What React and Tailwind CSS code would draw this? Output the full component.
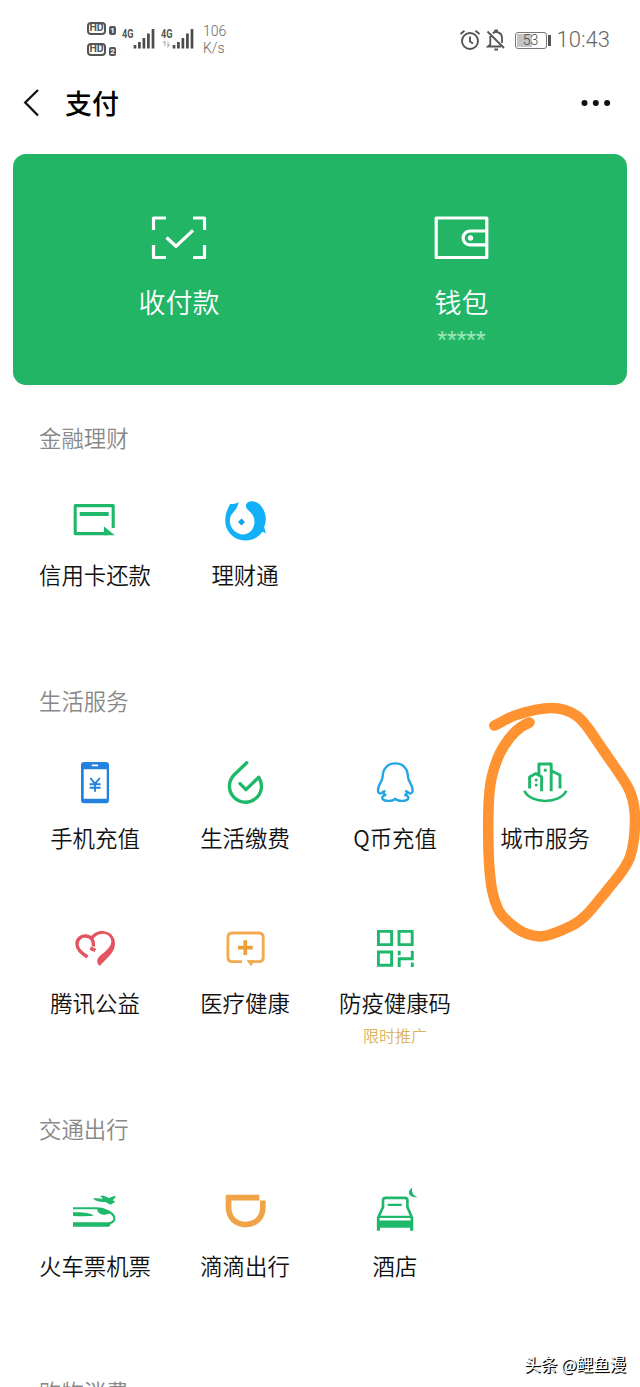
import React from 'react';

const GREEN = '#1fb86b';

function Icon({ children }) {
  return (
    <svg viewBox="0 0 60 60" className="block h-[60px] w-[60px]" fill="none">
      {children}
    </svg>
  );
}

const CardIcon = () => (
  <Icon>
    <path d="M48.2 38V15.6H10.2V43.6H42" stroke={GREEN} strokeWidth="3.1" strokeLinejoin="round" />
    <path d="M14.7 24H43.7" stroke={GREEN} strokeWidth="4" />
    <path d="M39 36.5L49.8 45.2H39Z" fill={GREEN} />
  </Icon>
);

const FundIcon = () => (
  <Icon>
    <path
      fill="#12b0f8"
      d="M23.7 12.3C20 14 18 14.5 15 13.8C14.3 16.5 12.5 19 11.5 22C10 27 9.6 33 11.6 38C14.5 45 21.5 50.5 30.5 50.5C37.5 50.5 43.5 47.5 47 42.3C48.2 41.8 49.5 42.3 50.6 43.8C50.8 41.5 49.8 39.5 49.1 37.3C50.8 33.3 51.3 29.3 50.2 24.3C48.2 16.3 43 11 36.7 11.2C32.5 11.2 30.4 14 31 17C31.7 20 36.3 22 38.2 26C40.6 31 39.6 37 36 41C31.5 45.5 24.5 45.5 19.8 41.3C14.8 36.8 13.6 30.5 16 25.5C18.5 21 22 20 23.7 12.3Z"
    />
    <path fill="#12a0e8" d="M26.5 28.5L30 32L26.5 35.5L23 32Z" />
  </Icon>
);

const PhoneIcon = () => (
  <Icon>
    <path
      fill="#2382de"
      fillRule="evenodd"
      d="M19 9H41Q44 9 44 12V47.3Q44 50.3 41 50.3H19Q16 50.3 16 47.3V12Q16 9 19 9ZM18.7 16.3V45.7H41.7V16.3ZM26.8 11.6V13.2H33V11.6Z"
    />
    <path d="M25.3 25L30 30.7L34.9 25M30 30.7V38.8M24.6 31.2H35.6M24.6 34.7H35.6" stroke="#2382de" strokeWidth="1.9" />
  </Icon>
);

const DropIcon = () => (
  <Icon>
    <path
      d="M31.7 9.8L19 22A16 16 0 1 0 43.7 24.2L31 36.6L25 30.6"
      stroke={GREEN}
      strokeWidth="3.4"
      strokeLinecap="round"
      strokeLinejoin="round"
    />
  </Icon>
);

const PenguinIcon = () => (
  <Icon>
    <path
      d="M19.5 38.2C17.6 38.6 17.2 40.3 15.4 40.6C13.6 40.6 12.9 38.8 13 36.5C13.3 31.5 17.4 28.5 17.6 24C17.8 16 22.3 10.4 30.3 10.4C38.3 10.4 42.8 16 43 24C43.2 28.5 47.3 31.5 47.6 36.5C47.7 38.8 47 40.6 45.2 40.6C43.4 40.3 43 38.6 41.1 38.2M18.6 39.2C18.9 40.6 19.6 41.4 20.4 42C17.6 42.6 16.6 44.4 17.6 46C19.5 48.8 28 48.4 30.3 45.7C32.6 48.4 41.1 48.8 43 46C44 44.4 43 42.6 40.2 42C41 41.4 41.7 40.6 42 39.2"
      stroke="#24a6e4"
      strokeWidth="2.4"
      strokeLinecap="round"
      strokeLinejoin="round"
    />
  </Icon>
);

const CityIcon = () => (
  <Icon>
    <g stroke={GREEN} strokeWidth="2.9" strokeLinejoin="round">
      <path d="M14.6 35.4V24L20.8 20.6L26.6 23.8V38.3M23.9 21V11H36.2V38.3M36.2 17.8L45 22V35.4" />
      <path d="M9.3 37.8C15.5 51.3 45 51.3 51.3 37.8" strokeWidth="2.6" />
    </g>
    <g fill={GREEN}>
      <circle cx="30.3" cy="17.2" r="1.6" />
      <circle cx="21.2" cy="27" r="1.5" />
      <circle cx="21.2" cy="32" r="1.5" />
    </g>
  </Icon>
);

const HeartIcon = () => (
  <Icon>
    <path d="M22.5 39C16 34.5 12 31.5 12 26C12 20.5 16.5 17.7 21 18C26.5 18.5 29 22.5 28.4 28.5" stroke="#e35460" strokeWidth="3.4" />
    <path d="M25.3 30.2L30.4 32.4" stroke="#e35460" strokeWidth="3.6" />
    <path
      fill="#e35460"
      d="M25.2 19.5C28 15.2 32.5 12.8 37.8 13C45 13.5 50.2 18.5 50 25.8C49.8 34.5 43.5 38.5 34.5 48C32 45.2 31.5 43 33 40.3C36 35.5 46 31 46.3 24C46.5 19 42.5 15.7 37.8 15.7C33.5 15.7 30.5 18 28 21.2Z"
    />
  </Icon>
);

const MedicalIcon = () => (
  <Icon>
    <g transform="translate(0 -2)">
      <path
        d="M27 45.6H17.4Q12.9 45.6 12.9 41.2V21.4Q12.9 17 17.4 17H43.7Q48.2 17 48.2 21.4V41.2Q48.2 45.6 43.7 45.6H33"
        stroke="#f2ab50"
        strokeWidth="2.9"
      />
      <path d="M31.5 44.3H39.5L36.2 50.3Z" fill="#f2ab50" />
      <path d="M30.3 24.2V39M23 31.6H37.7" stroke="#ec9f37" strokeWidth="3.7" />
    </g>
  </Icon>
);

const CodeIcon = () => (
  <Icon>
    <g transform="translate(0 -2)" stroke={GREEN} strokeWidth="2.9">
      <path d="M13.4 15.4H26.6V28.6H13.4ZM34 15.4H47.2V28.6H34ZM13.4 36H26.6V49.2H13.4Z" />
      <path d="M34.2 34.8V39.2M34.2 51V42.7H47.3V34.8M47.3 46.5V51" />
    </g>
  </Icon>
);

const TravelIcon = () => (
  <Icon>
    <path fill={GREEN} d="M28 17.6C31 17 35 17.6 38 17.8L35.2 14.9L38.2 14.4L44 17L48.5 15.2C50 14.9 50.8 15.4 50.3 16.6L47.8 19.2L50.4 21L45.3 23.8L40.5 21C35 21.4 30 20.3 28 17.6Z" />
    <path d="M8 27.2H31C40 27.2 49.5 32.5 49.5 37.7C49.5 40 47.5 41.4 44 42.4" stroke={GREEN} strokeWidth="2.1" />
    <path fill={GREEN} d="M32.5 27.3C38 27.3 43 30 45 32.5C41 34.2 36 34 33.7 31.8C32.5 30.7 31.8 29 32.5 27.3Z" />
    <path fill={GREEN} d="M8 31.3C17 31 25 31.5 28.8 34.8C22 35.4 15 35.2 8 34.9ZM8 41.2H45.5C46 43.5 45 45.8 43 45.8H8Z" />
  </Icon>
);

const DidiIcon = () => (
  <Icon>
    <path
      fill="#f0a447"
      d="M12 13.7H44.3V19.6H16.4V26.5C16.4 35 22 40.7 30.6 40.7C39.3 40.7 45 35 45 26.5V19.6H50.7V26.3C50.7 38 42.5 46.4 30.7 46.4C18.8 46.4 10.7 38 10.7 26.3V15Q10.7 13.7 12 13.7Z"
    />
  </Icon>
);

const HotelIcon = () => (
  <Icon>
    <path
      d="M13.2 49.4V36.5L18 26V19.5Q18 16.8 20.7 16.8H39.7Q42.4 16.8 42.4 19.5V26L46.9 36.5V49.4"
      stroke={GREEN}
      strokeWidth="2.7"
    />
    <path d="M22.7 23.8H36.8M14 35.8H46.5" stroke={GREEN} strokeWidth="2.3" />
    <path d="M12 39.5H48V49.4H45V46.8H15V49.4H12Z" fill={GREEN} />
    <path d="M47.3 6.7C42.3 9 42 17 52.6 16.2C48.3 14.5 46 11 47.3 6.7Z" fill={GREEN} />
  </Icon>
);

function Item({ icon, label, note }) {
  return (
    <div className="flex h-[165px] flex-col items-center whitespace-nowrap">
      {icon}
      <div className="mt-2 text-[22.4px] leading-8 text-[#111]">{label}</div>
      {note && <div className="mt-[5px] text-base leading-6 text-[#dcb45c]">{note}</div>}
    </div>
  );
}

function Section({ title, height, children }) {
  return (
    <section className={height}>
      <h2 className="pl-[39px] text-[22.4px] leading-8 text-[#888]">{title}</h2>
      <div className="mt-[37px] grid grid-cols-4 px-5">{children}</div>
    </section>
  );
}

function Signal({ data }) {
  return (
    <svg viewBox="0 0 34 24" className="block h-6 w-[34px]">
      <text x="0" y="11" fontSize="12.5" fontWeight="700" fill="#555" fontFamily="Roboto, sans-serif" textLength="11.5" lengthAdjust="spacingAndGlyphs">4G</text>
      <path d="M13 21.5V18M17.4 21.5V15M21.9 21.5V11M26.4 21.5V6.5M31 21.5V2" stroke="#4c4c4c" strokeWidth="2.7" />
      {data && <path d="M4 14V19M2.3 16L4 14M7 14.5V19.5L8.7 17.5" stroke="#bbb" strokeWidth="1.3" fill="none" />}
    </svg>
  );
}

function HdBadge({ n }) {
  return (
    <div className="flex h-[13px] items-end gap-[3px]">
      <span className="flex h-[13px] w-[19px] items-center justify-center rounded-[4px] border-2 border-[#555] text-[10.5px] font-bold leading-none text-[#555]">HD</span>
      <span className="flex h-[9px] w-[7px] items-center justify-center rounded-[2px] bg-[#555] text-[8px] font-bold leading-none text-white">{n}</span>
    </div>
  );
}

function StatusBar() {
  return (
    <div className="flex h-[78px] items-start justify-between pl-[87px] pr-[30px] font-['Roboto',sans-serif] text-[#666]">
      <div className="flex">
        <div className="mt-[22px] flex flex-col gap-2">
          <HdBadge n="1" />
          <HdBadge n="2" />
        </div>
        <div className="ml-[6px] mt-[27px] flex gap-[5px]">
          <Signal />
          <Signal data />
        </div>
        <div className="ml-[8px] mt-[23px] text-[14px] leading-[17px]">
          <div>106</div>
          <div>K/s</div>
        </div>
      </div>
      <div className="mt-[28px] flex h-6 items-center">
        <svg viewBox="0 0 22 22" className="h-[22px] w-[22px]" fill="none" stroke="#555" strokeWidth="1.9">
          <circle cx="11" cy="12" r="8" />
          <path d="M11 7.5V12.5L14 14.5M1.5 5L5.5 1.8M20.5 5L16.5 1.8" />
        </svg>
        <svg viewBox="0 0 20 22" className="ml-[5px] h-[22px] w-5" fill="none" stroke="#555" strokeWidth="1.8">
          <path d="M1.5 2.5L18 19M4.3 7V15.5L2 17.5H15M6.8 4.2C7.5 3.6 8.3 3.2 9.2 3V1.5H11V3C14.5 3.8 16 6 16 9V14M8.3 20.5H12" />
        </svg>
        <div className="ml-[9px] flex h-[17px] w-8 items-center rounded-[3px] border-[1.5px] border-[#777] p-[1px]">
          <div className="h-full w-[15px] bg-[#c4c4c4]">
            <div className="w-[28px] text-center text-[14px] leading-[13px] text-[#444]">53</div>
          </div>
        </div>
        <div className="ml-[1px] h-[11px] w-[3px] bg-[#555]" />
        <div className="ml-[6px] text-[22px] leading-6">10:43</div>
      </div>
    </div>
  );
}

export default function App() {
  return (
    <main className="relative h-[1387px] w-[640px] overflow-hidden bg-white font-['Noto_Sans_CJK_SC',sans-serif] font-[350]">
      <StatusBar />
      <header className="flex h-[76px] items-start pl-[22px] pr-[29px]">
        <svg viewBox="0 0 20 30" className="mt-[10px] h-[30px] w-5" fill="none" stroke="#111" strokeWidth="2.3">
          <path d="M16 2L3.2 14.5L16 27.5" />
        </svg>
        <h1 className="ml-[23px] mt-[5px] text-[27px] font-medium leading-10 text-black">支付</h1>
        <svg viewBox="0 0 30 8" className="ml-auto mt-[21px] h-2 w-[30px]" fill="#111">
          <circle cx="3.5" cy="4" r="3" />
          <circle cx="14.8" cy="4" r="3" />
          <circle cx="26.1" cy="4" r="3" />
        </svg>
      </header>

      <div className="mx-[13px] flex h-[231px] justify-between rounded-[13px] bg-[#22b566] px-[85px] pt-[61px] text-white">
        <div className="flex w-[162px] flex-col items-center">
          <svg viewBox="0 0 56 46" className="h-[46px] w-14" fill="none" stroke="#fff" strokeWidth="3.2">
            <path d="M2.5 15V3H15M42 3H53.5V15M2.5 30V42.5H15M42 42.5H53.5V30" strokeLinejoin="round" />
            <path d="M15.5 22.5L25 31.2L42 15.3" />
          </svg>
          <div className="mt-[21px] text-[27px] leading-10">收付款</div>
        </div>
        <div className="flex w-[161px] flex-col items-center">
          <svg viewBox="0 0 56 46" className="h-[46px] w-14" fill="none" stroke="#fff" strokeWidth="3.2">
            <path d="M2.2 3H52.8V42.5H2.2ZM52.8 16H36A6.9 6.9 0 0 0 36 29.8H52.8" strokeLinejoin="round" />
            <circle cx="36.5" cy="22.9" r="2.7" fill="#fff" stroke="none" />
          </svg>
          <div className="mt-[21px] text-[27px] leading-10">钱包</div>
          <div className="mt-[1px] font-['Roboto',sans-serif] text-[22.5px] font-normal leading-8 text-[#9be6b8]">*****</div>
        </div>
      </div>

      <div className="pt-[36px]">
        <Section title="金融理财" height="h-[263px]">
          <Item icon={<CardIcon />} label="信用卡还款" />
          <Item icon={<FundIcon />} label="理财通" />
        </Section>
        <Section title="生活服务" height="h-[428px]">
          <Item icon={<PhoneIcon />} label="手机充值" />
          <Item icon={<DropIcon />} label="生活缴费" />
          <Item icon={<PenguinIcon />} label="Q币充值" />
          <Item icon={<CityIcon />} label="城市服务" />
          <Item icon={<HeartIcon />} label="腾讯公益" />
          <Item icon={<MedicalIcon />} label="医疗健康" />
          <Item icon={<CodeIcon />} label="防疫健康码" note="限时推广" />
        </Section>
        <Section title="交通出行" height="h-[263px]">
          <Item icon={<TravelIcon />} label="火车票机票" />
          <Item icon={<DidiIcon />} label="滴滴出行" />
          <Item icon={<HotelIcon />} label="酒店" />
        </Section>
        <Section title="购物消费" height="h-8" />
      </div>

      {/* Hand-drawn highlight around the city services entry */}
      <svg viewBox="480 700 160 245" className="pointer-events-none absolute left-[480px] top-[700px] h-[245px] w-[160px]" fill="none">
        <path
          d="M494.3 725.5C502 722 509 717 518 714.5C529 711 540 708 551 708C561 708 570 711 577 716C585 722 591 732 597 741C603 750 608 757 613.5 765C620 775 627 783 630.5 793C634 802 635 810 635 819C635 833 634 845 630 857C625 871 614 881 605 893C595 904 586 919 571 926C561 931 550 936 540 936.5C531 936 523 933 516 928C508 922 501 916 498 909C493 898 491 887 490 875C488 856 488 838 488.3 815C488.5 800 489 788 492 776C495 764 498 755 504 746C510 736 518 727 529.5 722.5"
          stroke="#ff9231"
          strokeWidth="10.5"
          strokeLinecap="round"
          strokeLinejoin="round"
        />
      </svg>

      <div className="absolute bottom-[11px] right-[14px] whitespace-nowrap text-[16.5px] font-normal leading-6 text-white [text-shadow:1px_1px_1px_#000,1px_1px_0_#222]">
        头条 @鲤鱼漫
      </div>
    </main>
  );
}
